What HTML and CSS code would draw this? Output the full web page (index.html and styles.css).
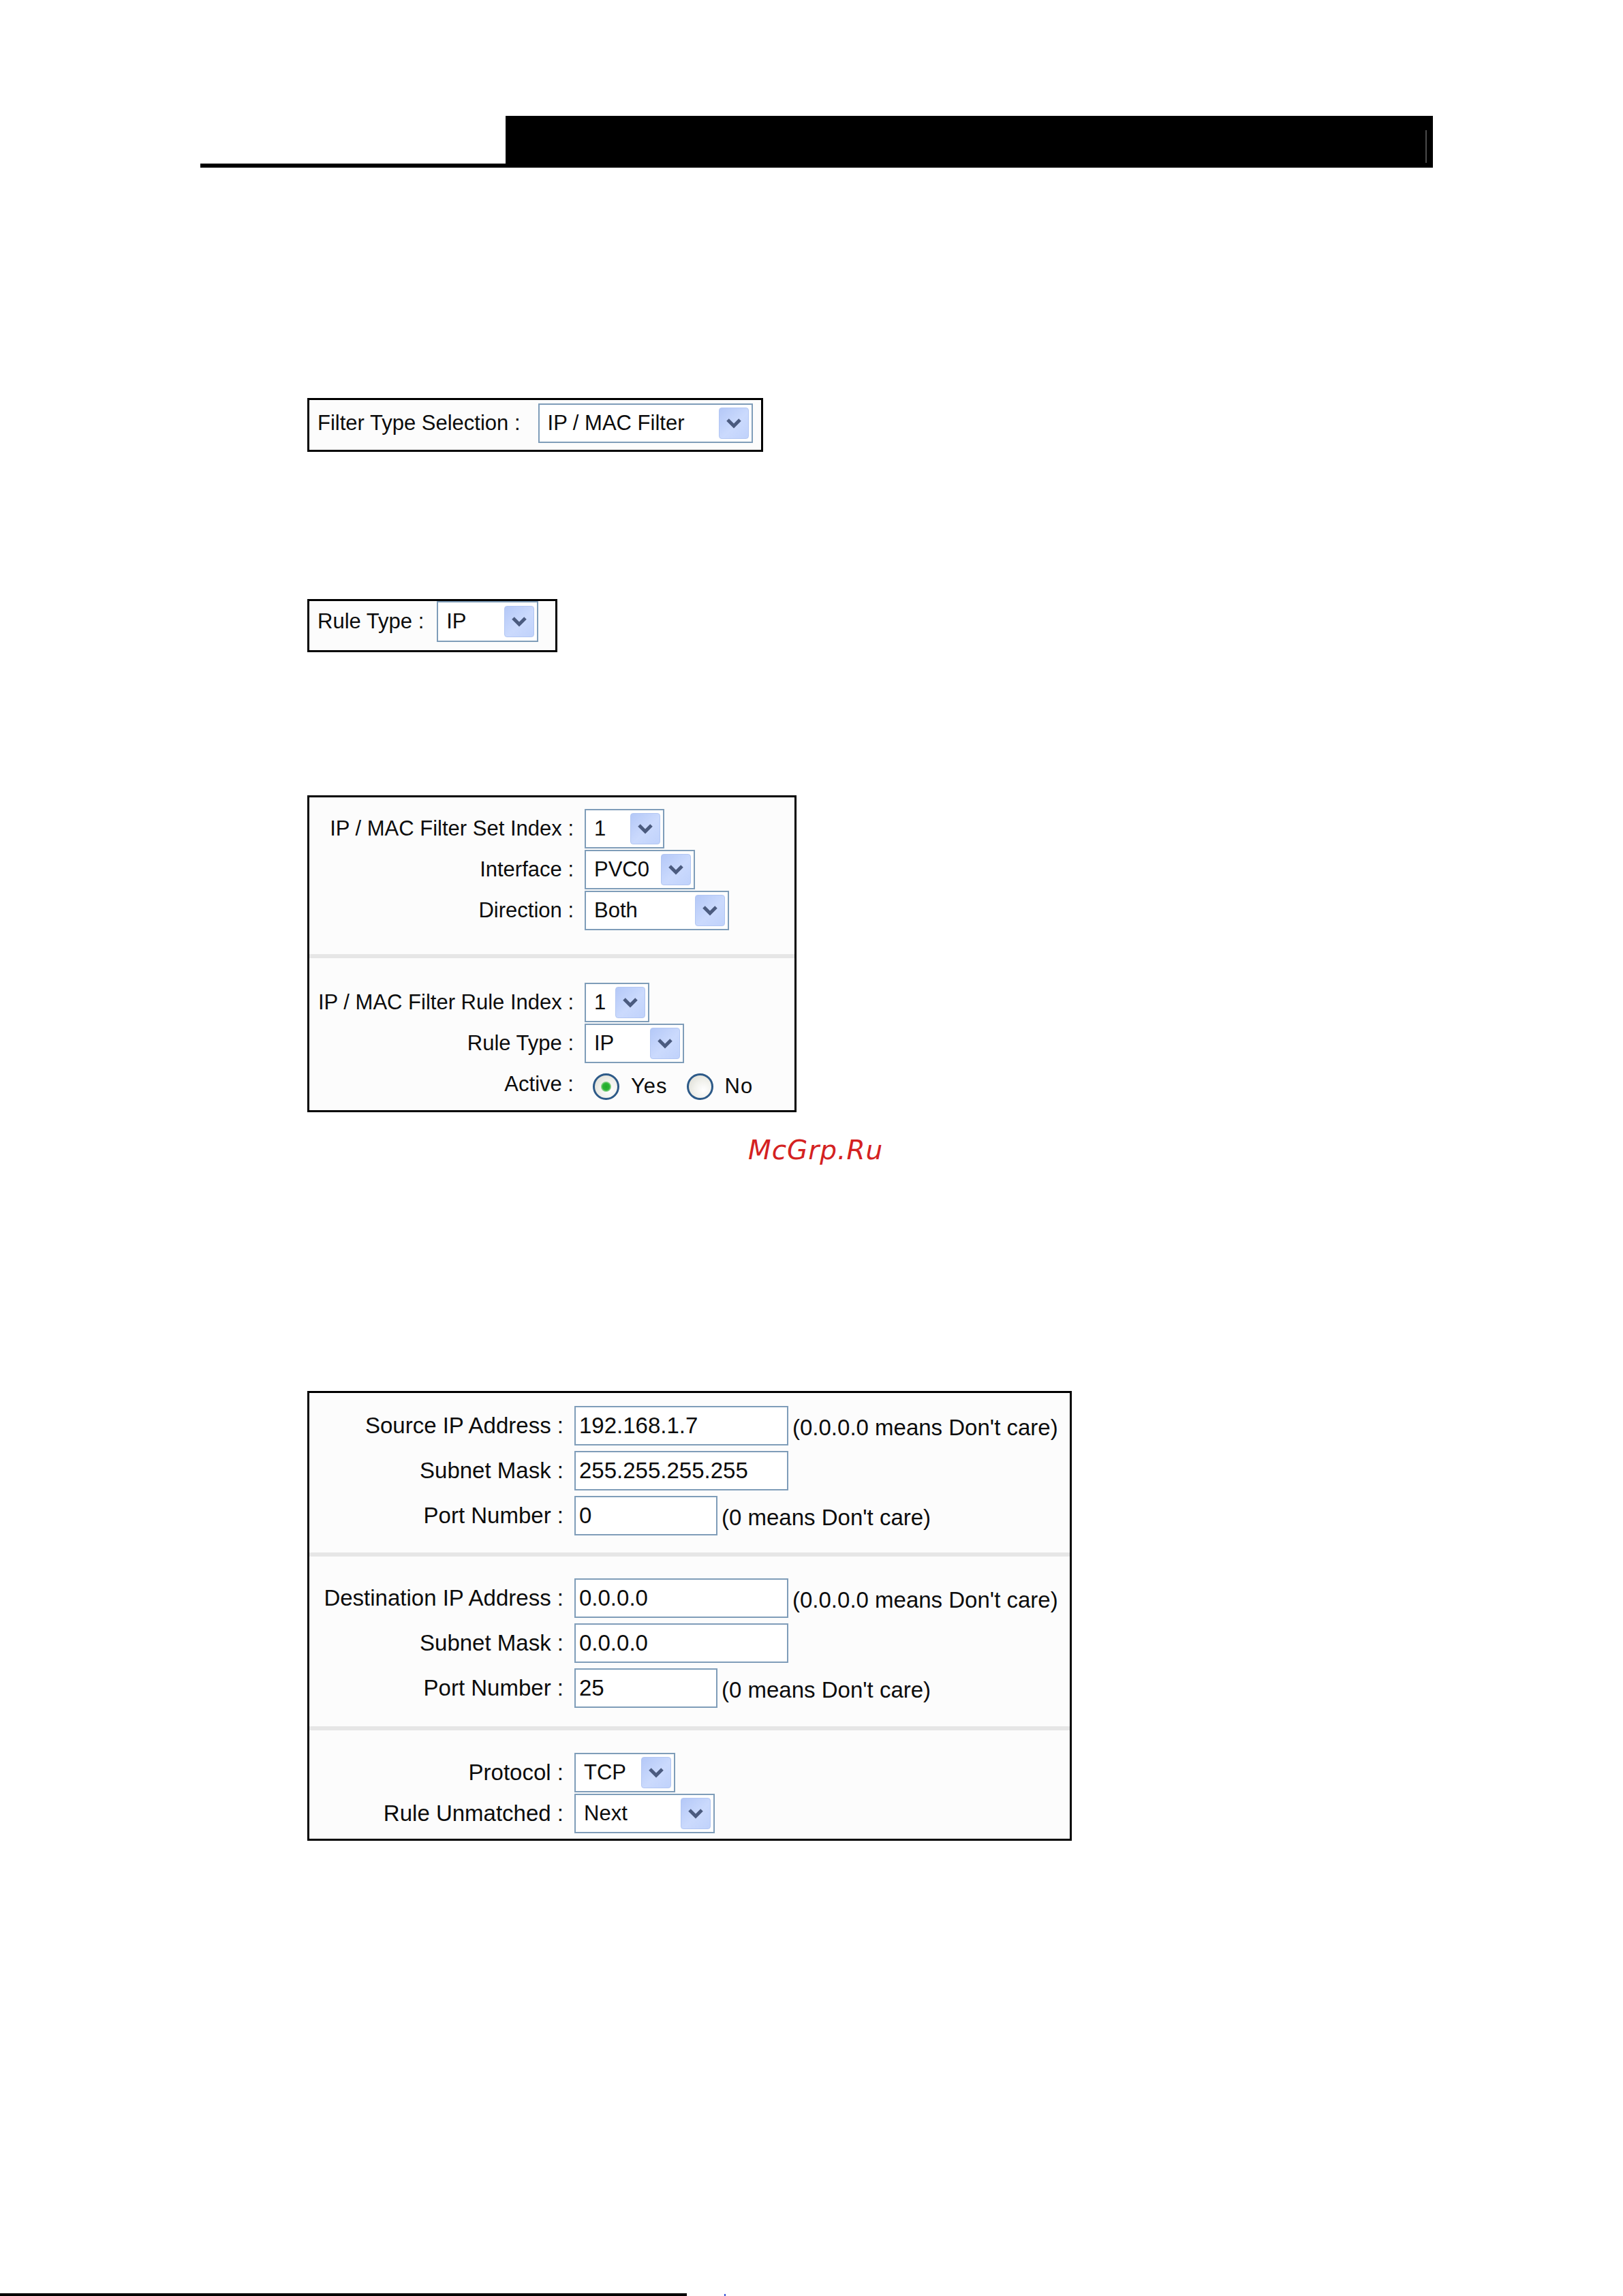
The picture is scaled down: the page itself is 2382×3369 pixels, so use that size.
FILE: index.html
```html
<!DOCTYPE html>
<html lang="en">
<head>
    <meta charset="UTF-8">
    <title>IP / MAC Filter</title>
    <link rel="stylesheet" href="styles.css">
</head>
<body>
    <div class="page">
        <!-- running head -->
        <header class="running-head">
            <span class="head-rule"></span>
            <span class="head-band"></span>
        </header>

        <!-- Filter type -->
        <section class="panel panel-filter">
            <span class="label">Filter Type Selection :</span>
            <div class="select filter-type">
                <span class="value">IP / MAC Filter</span>
                <span class="arrow"><svg viewBox="0 0 24 16" width="24" height="16"><path d="M3 3 L12 12 L21 3" fill="none" stroke="#4b5b7f" stroke-width="5"/></svg></span>
            </div>
        </section>

        <!-- Rule type -->
        <section class="panel panel-rule">
            <span class="label">Rule Type :</span>
            <div class="select rule-type-small">
                <span class="value">IP</span>
                <span class="arrow"><svg viewBox="0 0 24 16" width="24" height="16"><path d="M3 3 L12 12 L21 3" fill="none" stroke="#4b5b7f" stroke-width="5"/></svg></span>
            </div>
        </section>

        <!-- Set / rule index -->
        <section class="panel panel-set">
            <div class="rows rows-set">
                <span class="label">IP / MAC Filter Set Index :</span>
                <div class="select set-index">
                    <span class="value">1</span>
                    <span class="arrow"><svg viewBox="0 0 24 16" width="24" height="16"><path d="M3 3 L12 12 L21 3" fill="none" stroke="#4b5b7f" stroke-width="5"/></svg></span>
                </div>
                <span class="label">Interface :</span>
                <div class="select iface">
                    <span class="value">PVC0</span>
                    <span class="arrow"><svg viewBox="0 0 24 16" width="24" height="16"><path d="M3 3 L12 12 L21 3" fill="none" stroke="#4b5b7f" stroke-width="5"/></svg></span>
                </div>
                <span class="label">Direction :</span>
                <div class="select direction">
                    <span class="value">Both</span>
                    <span class="arrow"><svg viewBox="0 0 24 16" width="24" height="16"><path d="M3 3 L12 12 L21 3" fill="none" stroke="#4b5b7f" stroke-width="5"/></svg></span>
                </div>
            </div>
            <div class="divider"></div>
            <div class="rows rows-rule">
                <span class="label">IP / MAC Filter Rule Index :</span>
                <div class="select rule-index">
                    <span class="value">1</span>
                    <span class="arrow"><svg viewBox="0 0 24 16" width="24" height="16"><path d="M3 3 L12 12 L21 3" fill="none" stroke="#4b5b7f" stroke-width="5"/></svg></span>
                </div>
                <span class="label">Rule Type :</span>
                <div class="select rule-type">
                    <span class="value">IP</span>
                    <span class="arrow"><svg viewBox="0 0 24 16" width="24" height="16"><path d="M3 3 L12 12 L21 3" fill="none" stroke="#4b5b7f" stroke-width="5"/></svg></span>
                </div>
                <span class="label">Active :</span>
                <div class="radios">
                    <span class="radio checked"></span>
                    <span class="radio-label">Yes</span>
                    <span class="radio"></span>
                    <span class="radio-label">No</span>
                </div>
            </div>
        </section>

        <p class="watermark">McGrp.Ru</p>

        <!-- IP rule details -->
        <section class="panel panel-ip">
            <div class="rows rows-src">
                <span class="label">Source IP Address :</span>
                <div class="field">
                    <span class="input ip">192.168.1.7</span>
                    <span class="hint">(0.0.0.0 means Don't care)</span>
                </div>
                <span class="label">Subnet Mask :</span>
                <div class="field">
                    <span class="input ip">255.255.255.255</span>
                </div>
                <span class="label">Port Number :</span>
                <div class="field">
                    <span class="input port">0</span>
                    <span class="hint">(0 means Don't care)</span>
                </div>
            </div>
            <div class="divider"></div>
            <div class="rows rows-dst">
                <span class="label">Destination IP Address :</span>
                <div class="field">
                    <span class="input ip">0.0.0.0</span>
                    <span class="hint">(0.0.0.0 means Don't care)</span>
                </div>
                <span class="label">Subnet Mask :</span>
                <div class="field">
                    <span class="input ip">0.0.0.0</span>
                </div>
                <span class="label">Port Number :</span>
                <div class="field">
                    <span class="input port">25</span>
                    <span class="hint">(0 means Don't care)</span>
                </div>
            </div>
            <div class="divider"></div>
            <div class="rows rows-proto">
                <span class="label">Protocol :</span>
                <div class="select protocol">
                    <span class="value">TCP</span>
                    <span class="arrow"><svg viewBox="0 0 24 16" width="24" height="16"><path d="M3 3 L12 12 L21 3" fill="none" stroke="#4b5b7f" stroke-width="5"/></svg></span>
                </div>
                <span class="label">Rule Unmatched :</span>
                <div class="select unmatched">
                    <span class="value">Next</span>
                    <span class="arrow"><svg viewBox="0 0 24 16" width="24" height="16"><path d="M3 3 L12 12 L21 3" fill="none" stroke="#4b5b7f" stroke-width="5"/></svg></span>
                </div>
            </div>
        </section>

        <footer class="foot">
            <span class="foot-rule"></span>
            <span class="foot-mark"></span>
        </footer>
    </div>
</body>
</html>
```

FILE: styles.css
```css
* {
    margin: 0;
    padding: 0;
    box-sizing: border-box;
}

html, body {
    width: 2382px;
    height: 3369px;
    overflow: hidden;
    background: #fff;
}

body {
    font-family: "Liberation Sans", Arial, sans-serif;
    font-size: 31px;
    color: #0c0c0c;
}

.page {
    height: 3369px;
    padding-top: 170px;
    display: flex;
    flex-direction: column;
}

/* running head */
.running-head {
    display: flex;
    align-items: flex-end;
    margin-left: 294px;
}

.head-rule {
    width: 448px;
    height: 6px;
    background: #000;
}

.head-band {
    width: 1361px;
    height: 76px;
    background: #000;
    position: relative;
}

.head-band::after {
    content: '';
    position: absolute;
    right: 9px;
    top: 21px;
    width: 2px;
    height: 48px;
    background: #4a4a4a;
}

/* panels */
.panel {
    border: 3px solid #000;
    margin-left: 451px;
    background: #fcfcfc;
}

.panel-filter {
    margin-top: 338px;
    width: 669px;
    height: 79px;
    display: flex;
    align-items: center;
    gap: 26px;
    padding: 5px 8px 10px 12px;
}

.panel-rule {
    margin-top: 216px;
    width: 367px;
    height: 78px;
    display: flex;
    align-items: flex-start;
    gap: 19px;
    padding: 0 8px 0 12px;
}

.panel-rule .label {
    line-height: 60px;
}

.panel-rule .select {
    height: 60px;
}

.panel-set {
    margin-top: 210px;
    width: 718px;
    height: 465px;
}

.rows {
    display: grid;
    grid-template-columns: 388px auto;
    column-gap: 16px;
    row-gap: 2px;
    align-items: center;
    justify-items: start;
}

.rows .label {
    justify-self: end;
    text-align: right;
    white-space: nowrap;
}

.rows-set {
    padding: 17px 0 35px;
}

.rows-rule {
    padding: 36px 0 9px;
    grid-auto-rows: 58px;
}

.divider {
    height: 6px;
    background: #e6e6e6;
}

/* select boxes */
.select {
    height: 58px;
    display: flex;
    align-items: center;
    justify-content: space-between;
    border: 2px solid #7f9db9;
    background: #fff;
    padding: 0 4px 0 12px;
}

.value {
    white-space: nowrap;
}

.arrow {
    width: 44px;
    height: 46px;
    border-radius: 4px;
    border: 1px solid #b3c7f3;
    background: linear-gradient(135deg, #b4c8f7 0%, #cbdafd 55%, #c0d2fb 100%);
    display: flex;
    align-items: center;
    justify-content: center;
}

.filter-type { width: 315px; }
.rule-type-small { width: 149px; }
.set-index { width: 117px; }
.iface { width: 162px; }
.direction { width: 212px; }
.rule-index { width: 95px; }
.rule-type { width: 146px; }
.protocol { width: 148px; }
.unmatched { width: 206px; }

/* radios */
.radios {
    display: flex;
    align-items: center;
    margin-left: 12px;
    padding-top: 6px;
}

.radio {
    width: 39px;
    height: 39px;
    border-radius: 50%;
    border: 3px solid #2d5a88;
    background: radial-gradient(circle at 65% 65%, #ffffff 0%, #f1f1ec 45%, #d9d9d0 100%);
}

.radio.checked {
    background:
        radial-gradient(circle, #22a82a 0, #2cb535 5px, #8fd28f 7px, transparent 8px),
        radial-gradient(circle at 65% 65%, #ffffff 0%, #f1f1ec 45%, #d9d9d0 100%);
}

.radio-label {
    margin: 0 28px 0 17px;
    letter-spacing: 1px;
}

/* watermark */
.watermark {
    margin: 33px 0 0 1098px;
    font-family: "DejaVu Sans", sans-serif;
    font-style: italic;
    font-size: 39px;
    line-height: 45px;
    letter-spacing: 1px;
    color: #d42121;
}

/* ip panel */
.panel-ip {
    margin-top: 331px;
    width: 1122px;
    height: 660px;
    font-size: 33px;
}

.panel-ip .rows {
    grid-template-columns: 373px auto;
    column-gap: 16px;
    row-gap: 8px;
}

.rows-src {
    padding: 19px 0 25px;
}

.rows-dst {
    padding: 32px 0 27px;
}

.panel-ip .rows-proto {
    padding: 33px 0 8px;
    row-gap: 2px;
}

.panel-ip .select {
    font-size: 31px;
}

.field {
    display: flex;
    align-items: center;
    gap: 6px;
}

.input {
    height: 58px;
    display: flex;
    align-items: center;
    border: 2px solid #7f9db9;
    background: #fff;
    padding-left: 5px;
    white-space: nowrap;
}

.input.ip { width: 314px; }
.input.port { width: 210px; }

.hint {
    padding-top: 6px;
    white-space: nowrap;
}

/* page foot */
.foot {
    margin-top: auto;
    display: flex;
    align-items: flex-end;
    height: 4px;
}

.foot-rule {
    width: 1008px;
    height: 4px;
    background: #000;
}

.foot-mark {
    margin-left: 55px;
    width: 2px;
    height: 3px;
    background: #2f4fd8;
}
```
